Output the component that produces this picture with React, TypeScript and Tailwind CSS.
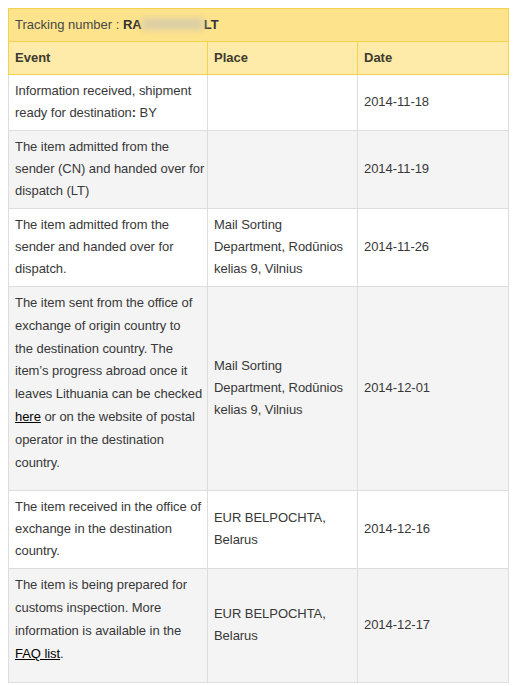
const rows: {
  event: React.ReactNode;
  place?: React.ReactNode;
  date: string;
  extra?: boolean;
}[] = [
  {
    event: (
      <>
        Information received, shipment
        <br />
        ready for destination<b className="font-bold">:</b> BY
      </>
    ),
    date: "2014-11-18",
  },
  {
    event: (
      <>
        The item admitted from the
        <br />
        sender (CN) and handed over for
        <br />
        dispatch (LT)
      </>
    ),
    date: "2014-11-19",
  },
  {
    event: (
      <>
        The item admitted from the
        <br />
        sender and handed over for
        <br />
        dispatch.
      </>
    ),
    place: "Mail Sorting Department, Rodūnios kelias 9, Vilnius",
    date: "2014-11-26",
  },
  {
    event: (
      <>
        The item sent from the office of
        <br />
        exchange of origin country to
        <br />
        the destination country. The
        <br />
        item’s progress abroad once it
        <br />
        leaves Lithuania can be checked
        <br />
        <a className="text-black underline">here</a> or on the website of postal
        <br />
        operator in the destination
        <br />
        country.
      </>
    ),
    place: "Mail Sorting Department, Rodūnios kelias 9, Vilnius",
    date: "2014-12-01",
    extra: true,
  },
  {
    event: (
      <>
        The item received in the office of
        <br />
        exchange in the destination
        <br />
        country.
      </>
    ),
    place: "EUR BELPOCHTA, Belarus",
    date: "2014-12-16",
  },
  {
    event: (
      <>
        The item is being prepared for
        <br />
        customs inspection. More
        <br />
        information is available in the
        <br />
        <a className="text-black underline">FAQ list</a>.
      </>
    ),
    place: "EUR BELPOCHTA, Belarus",
    date: "2014-12-17",
    extra: true,
  },
];

export default function App() {
  return (
    <div className="min-h-screen bg-white p-2 font-['Liberation_Sans',Arial,sans-serif] text-[13px] text-[#383838]">
      <table className="w-[500px] table-fixed border-collapse">
        <colgroup>
          <col className="w-[199px]" />
          <col className="w-[150px]" />
          <col className="w-[151px]" />
        </colgroup>
        <thead>
          <tr>
            <th
              colSpan={3}
              className="h-[33px] border border-[#f3d34e] bg-[#fde38b] px-[6px] text-left font-normal text-[#484848]"
            >
              Tracking number :{" "}
              <b className="font-bold text-[#333]">
                RA
                <span className="inline-block h-[12px] w-[62px] bg-[#dccfa6] align-[-1px] blur-[3px]" />
                LT
              </b>
            </th>
          </tr>
          <tr className="bg-[#feeaa9]">
            {["Event", "Place", "Date"].map((h) => (
              <th
                key={h}
                className="h-[33px] border border-[#f3d34e] px-[6px] text-left font-bold text-[#3d3a2e]"
              >
                {h}
              </th>
            ))}
          </tr>
        </thead>
        <tbody className="tracking-[-0.05px]">
          {rows.map((r, i) => (
            <tr key={r.date} className={i % 2 === 1 ? "bg-[#f4f4f4]" : "bg-white"}>
              <td
                className={`whitespace-nowrap border border-[#dddddd] px-[6px] align-middle ${
                  r.extra ? "pt-[5px] pb-[16px] leading-[22.8px]" : "pt-[5px] pb-[6px] leading-[22px]"
                }`}
              >
                {r.event}
              </td>
              <td className="border border-[#dddddd] px-[6px] pt-[5px] pb-[6px] align-middle leading-[22px]">
                {r.place}
              </td>
              <td className="border border-[#dddddd] px-[6px] pt-[5px] pb-[6px] align-middle leading-[22px]">
                {r.date}
              </td>
            </tr>
          ))}
        </tbody>
      </table>
    </div>
  );
}
